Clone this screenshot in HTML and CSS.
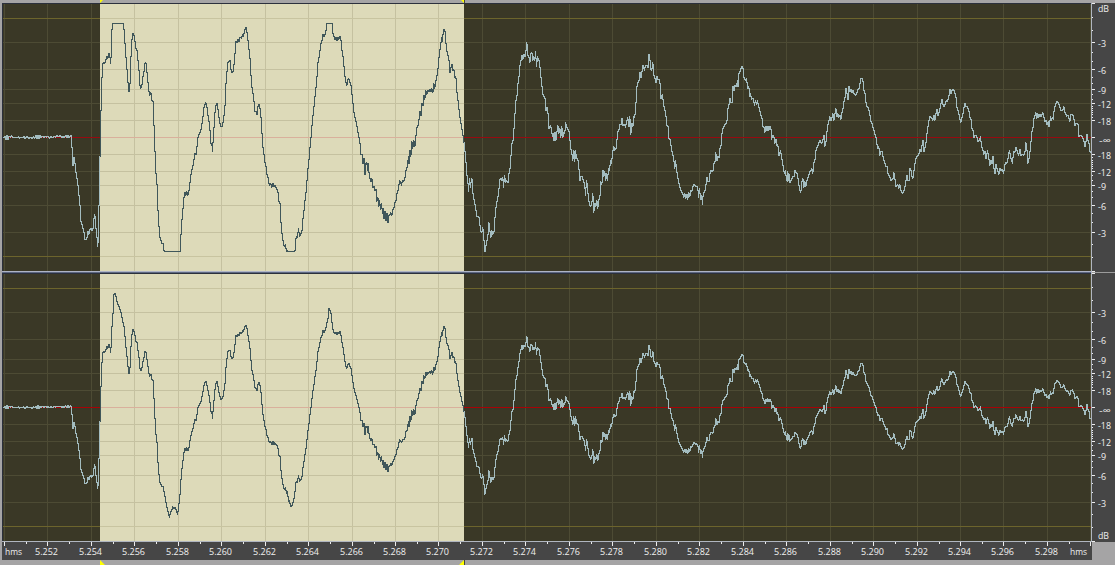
FILE: index.html
```
<!DOCTYPE html>
<html lang="en">
<head>
    <meta charset="UTF-8">
    <title>Waveform</title>
    <link rel="stylesheet" href="styles.css">
</head>
<body>
<div class="editor">
    <svg class="cue-bar" width="1115" height="3" viewBox="0 0 1115 3">
        <path class="cue" d="M100 0h3l-3 3zM461 0h3v3z"/>
        <path class="cue-line" d="M464 0h1v3h-1z"/>
    </svg>
    <div class="tracks">
        <div class="channels">
            <svg class="pane" id="left" width="1089" height="268" viewBox="2 3 1089 268"></svg>
            <div class="divider"></div>
            <svg class="pane" id="right" width="1089" height="268" viewBox="2 3 1089 268"></svg>
        </div>
        <svg class="db-ruler" id="db" width="24" height="539" viewBox="1091 3 24 539"></svg>
    </div>
    <svg class="time-ruler" id="time" width="1090" height="19" viewBox="2 541 1090 19"></svg>
    <svg class="cue-bar" width="1115" height="5" viewBox="0 560 1115 5">
        <path class="cue" d="M100 560l5 5h-5zM464 560v5h-5z"/>
        <path class="cue-line" d="M464 560h1v5h-1z"/>
    </svg>
</div>
<script src="wave.js"></script>
</body>
</html>
```
FILE: styles.css
```
body{ margin:0; background:#a5a4a5; overflow:hidden; }
svg{ display:block; shape-rendering:crispEdges; }
.editor{ width:1115px; height:565px; background:#a5a4a5; }
.tracks{ display:flex; margin-left:2px; height:538px; }
.channels{ width:1089px; }
.divider{ height:2px; box-sizing:border-box; border-top:1px solid #aeb4c5; background:#5d6780; }
.pane{ background:#3a3826; }
.time-ruler{ margin-left:2px; position:relative; }

/* markers over the selection */
.cue{ fill:#ffff00; shape-rendering:auto; }
.cue-line{ fill:#45453c; }

/* pane */
.bg{ fill:#3a3826; }
.grid{ fill:#4d4b34; }
.limit{ fill:#6c642c; }
.zero{ fill:#970a10; }
#right .zero{ fill:#a80206; }
.wave{ fill:none; stroke:#a3bcbf; stroke-width:1; }
.sel .bg{ fill:#dddab9; }
.sel .grid{ fill:#c5c1a0; }
.sel .limit{ fill:#c8c4a0; }
.sel .zero, #right .sel .zero{ fill:#d9b09c; }
.sel .wave{ stroke:#40575a; }
.frame{ fill:#2b303c; }

/* rulers */
.ruler-bg{ fill:#464646; }
.ruler-line{ fill:#b0b6c0; }
.ruler-split{ fill:#9b9b9b; }
.tick{ fill:#ececec; }
.label{ fill:#f0f0f0; font:9.5px "Open Sans", "Noto Sans", sans-serif; }
```
FILE: wave.js
```
// samples: x,y pairs on a grid of 1/3 px, zero level at 412.5
var ZERO = 412.5;
var parts = [
    [0, '10,412 14,408 17,417 20,406 23,417 26,408 30,411 34,407 36,412 52,412 54,409 57,415 60,412 66,412 70,410 74,415 78,409 82,412 86,414 90,411 95,415 99,410 103,414 107,407 110,416 113,406 116,416 119,407 122,412 128,408 131,413 135,408 138,412 143,408 147,414 151,408 155,413 160,409 165,411 170,407 175,410 180,407 184,413 187,408 190,413 195,406 200,412 203,406 206,412 210,406 213,409 ' +
        '215,442 218,497 221,472 223,485 226,512 228,528 231,541 234,570 237,600 240,635 242,663 245,672 248,685 251,698 254,718 258,718 261,706 263,694 265,702 268,690 271,684 274,692 278,684 281,656 283,643 286,680 289,705 291,738 294,717 296,617 299,468 302,330 304,242 307,192 309,187 313,190 317,178 320,168 322,175 325,159 328,168 330,190 333,155 335,88 337,50 340,-39 343,-46 346,-35 350,-15 353,-2 356,8 362,30 365,50 367,70 370,81 373,122 ' +
        '376,165 379,203 382,242 384,262 386,274 388,262 390,220 392,168 395,118 398,100 401,107 403,120 406,145 410,152 413,182 416,212 418,255 421,265 424,257 427,231 430,218 433,190 436,186 438,205 441,232 444,265 447,286 450,278 453,280 455,302 458,305 460,362 462,425 465,485 467,520 471,575 473,632 476,680 478,712 482,722 485,730 488,731 491,751 495,784 498,804 501,824 505,844 507,854 510,831 514,824 516,811 520,818 524,815 528,828 531,842 534,820 536,797 538,765 ' +
        '540,745 542,703 545,658 548,625 551,592 554,577 556,585 559,575 562,585 565,577 568,550 571,527 574,510 578,495 581,478 584,460 587,463 590,440 593,412 597,400 600,395 603,380 607,353 610,325 613,315 616,308 619,320 622,343 625,360 628,385 631,430 634,430 636,455 638,428 641,383 643,342 647,315 650,310 652,325 655,350 659,370 662,380 665,378 669,362 672,330 675,300 677,250 680,215 683,187 686,184 689,182'],
    [690, '0,205 4,216 7,216 9,205 12,182 14,160 17,123 20,127 23,118 26,123 29,112 33,115 37,104 39,108 43,90 46,82 49,92 51,110 54,135 57,160 60,192 62,225 65,262 68,280 71,305 74,333 78,337 80,343 83,320 86,313 89,325 92,352 94,392 97,438 100,460 103,487 106,492 108,520 112,530 115,548 118,555 121,550 124,562 127,549 130,560 133,555 136,562 140,567 143,578 145,603 149,610 150,645 153,688 156,710 159,735 162,740 165,733 168,757 171,751 174,791 177,784 180,810 184,807 187,797 190,784 193,757 196,717 ' +
        '199,708 201,712 204,685 207,708 210,705 213,697 216,683 218,655 221,630 224,600 227,578 230,540 233,505 236,478 239,442 242,412 245,375 248,345 251,320 254,290 257,262 260,228 263,187 266,172 269,150 272,130 275,122 278,104 281,110 284,102 287,92 290,70 293,55 296,14 299,21 302,34 305,70 308,99 311,110 314,117 317,113 320,120 323,113 325,117 327,108 330,110 332,122 334,147 337,165 340,195 343,225 346,247 349,255 352,240 355,235 358,247 361,250 363,270 366,295 369,328 372,345 375,360 378,370 381,390 385,410 388,425 391,463 396,465 398,490 401,475 404,522 406,490 409,488 411,512 413,490 415,515 418,533 421,545 424,535 427,562 431,560 434,572 437,568 439,605 442,592 445,620 447,600 450,628 453,610 456,640 459,625 461,655 464,635 467,660 470,640 473,668 475,648 478,645 481,638 484,645 487,630 490,623 494,608 497,600 500,580 503,572 507,542 510,545 513,555 516,540 519,543 523,535 527,510 530,503 534,470 536,490 539,450 541,470 544,425 547,445 550,420 553,440 556,410 559,385 562,378 566,357 569,335 572,345 575,310 578,315 580,285 583,297 586,272 589,282 592,270 595,275 598,268 601,275 604,265 607,278 610,250 612,265 615,255 618,228 621,225 624,187 627,155 630,140 633,112 636,124 638,103 641,87 644,95 646,125 648,152 653,165 656,180 659,217 662,203 665,192 667,212 670,208 673,232 676,228 678,262 681,290 684,315 687,342 690,362 693,378 696,400 699,410'],
    [1380, '12,445 13,448 16,478 18,520 21,530 24,573 27,535 30,562 33,535 36,540 38,580 40,597 43,610 46,628 50,648 55,650 58,672 60,690 64,698 67,683 70,715 73,762 76,740 79,725 82,712 85,667 88,690 91,712 94,692 97,702 100,700 102,672 105,635 108,610 112,592 115,572 118,540 121,535 125,540 127,532 129,562 132,525 135,548 138,540 141,548 144,545 146,520 149,505 152,465 155,430 158,420 161,385 164,340 167,300 170,285 173,250 176,228 179,197 182,180 185,165 187,178 190,162 194,168 197,150 199,127 202,165 205,170 208,188 211,162 214,158 217,180 220,170 223,180 225,153 228,198 231,170 234,178 237,185 240,220 243,245 246,275 249,290 253,292 257,330 260,322 263,340 266,385 270,375 273,390 276,410 278,400 281,420 284,398 286,421 289,398 292,375 295,400 298,385 301,412 304,380 307,412 310,398 313,400 315,368 318,380 322,388 325,392 328,415 331,445 334,460 337,480 340,450 343,485 345,450 348,475 352,478 355,505 359,540 362,530 366,530 369,545 372,548 375,585 378,542 381,560 384,598 387,610 390,620 394,610 397,580 400,637 403,610 406,620 409,600 412,625 415,600 418,595 421,545 424,553 428,512 430,530 433,515 436,540 439,520 441,540 444,505 447,512 450,480 453,490 456,460 460,440 463,450 467,445 470,418 473,395 476,388 479,372 482,372 485,355 488,375 492,372 495,382 498,365 502,352 504,375 506,380 508,348 511,404 514,370 517,380 520,350 523,353 525,315 528,300 530,258 533,248 536,240 539,217 542,232 545,215 548,195 552,210 555,197 559,195 563,203 566,163 569,180 571,207 574,210 577,187 580,225 583,232 587,248 590,230 593,238 597,240 600,262 602,295 606,282 609,312 613,330 616,345 620,375 623,380 626,415 630,420 633,452 637,462 640,480 643,505 645,480 648,508 651,528 655,550 658,560 662,570 666,580 670,592 673,580 676,595 679,582 682,597 685,578 688,590 691,570 694,573 697,560 701,553 705,560 709,558'],
    [2070, '20,560 23,570 24,592 27,565 30,598 33,585 36,613 38,590 41,578 44,570 47,552 50,533 53,545 56,545 58,520 62,512 67,515 70,492 73,490 76,458 79,482 82,470 86,472 89,445 92,435 95,400 98,385 102,375 107,370 110,360 113,325 117,308 119,295 121,308 125,308 128,260 131,270 134,257 138,260 141,240 143,260 146,220 150,212 154,198 158,205 161,232 165,240 168,235 172,265 175,258 177,290 180,280 183,298 187,295 190,305 192,315 195,300 198,312 201,300 204,320 207,322 210,345 214,350 217,378 220,380 223,398 227,380 230,390 232,378 235,390 238,380 241,380 243,418 247,405 250,410 253,430 257,418 259,435 262,432 264,465 267,465 270,452 273,470 276,485 279,508 282,520 285,510 288,540 291,515 292,545 295,520 298,548 302,540 307,530 311,530 314,512 317,518 321,523 324,545 327,570 331,577 333,550 337,535 340,562 343,545 346,560 350,540 354,530 358,515 361,512 364,505 367,520 370,490 374,478 377,452 381,438 384,432 389,420 393,430 397,422 401,405 403,438 406,430 408,410 411,378 415,362 418,350 420,360 423,362 427,340 430,360 433,345 436,325 439,350 442,340 445,352 448,345 451,358 454,338 457,328 460,305 463,298 467,265 470,280 473,298 476,260 479,275 482,268 485,278 488,270 491,280 495,285 499,280 502,270 505,268 508,252 511,237 515,235 518,245 520,270 523,275 527,308 530,318 534,325 538,345 541,362 545,370 548,382 552,398 556,410 559,430 562,445 565,440 568,465 571,455 575,455 579,478 583,488 586,500 590,498 593,520 598,530 602,540 607,538 610,518 613,530 615,558 619,558 622,553 625,565 628,553 632,570 636,580 640,573 644,560 647,540 650,527 653,540 656,540'],
    [2700, '28,505 32,510 34,530 37,535 40,515 43,492 46,475 50,468 55,462 58,448 62,455 64,440 68,422 70,455 73,445 76,432 80,400 83,378 86,362 89,350 93,352 97,360 100,345 103,360 107,340 110,328 113,345 117,335 121,312 124,298 128,312 131,320 135,310 138,300 141,305 145,290 149,268 152,280 156,268 160,270 163,280 167,292 169,320 173,330 177,350 180,368 183,358 187,345 190,325 194,310 197,318 201,322 205,332 208,350 213,360 215,385 219,395 221,412 225,405 229,410 233,425 237,420 240,410 243,440 247,450 250,462 254,455 257,475 261,452 265,475 268,495 272,482 275,490 278,468 280,505 284,520 287,492 290,505 295,523 298,505 302,512 306,507 309,520 312,500 315,487 319,490 322,478 327,450 330,470 336,490 339,455 343,458 346,442 350,452 354,465 359,447 362,465 366,462 369,467 373,460 376,427 379,445 382,490 386,475 389,455 392,425 395,395 399,375 401,355 406,338 409,355 412,340 415,352 418,343 421,350 424,345 427,338 430,350 434,365 438,360 440,372 444,365 446,378 450,350 453,360 456,352 459,358 461,335 464,318 470,303 474,308 478,320 482,332 486,332 490,320 494,338 498,348 502,345 508,365 511,345 516,342 520,355 524,375 528,370 532,370 536,408 541,405 545,410 549,418 552,432 554,440 557,425 560,402 563,420 566,430 568,455 573,460']
];
var samples = [];
parts.forEach(function(part){
    part[1].split(' ').forEach(function(pair){
        var p = pair.split(',');
        samples.push([part[0] + +p[0], +p[1]]);
    });
});

var xs = [4,47,91,134,178,221,265,308,352,395,438,482,525,569,612,656,699,743,786,830,873,917,960,1003,1047,1090];
var ys = [42,69,89,103,120,154,171,185,205,232];
var SEL = [100,464];

function rect(cls,x,y,w,h){
    return '<rect class="'+cls+'" x="'+x+'" y="'+y+'" width="'+w+'" height="'+h+'"/>';
}
function label(text,x,y,width){
    return '<text class="label" x="'+x+'" y="'+y+'" textLength="'+width+'" lengthAdjust="spacingAndGlyphs">'+text+'</text>';
}

// one vertical run per pixel column keeps the trace stepped
function wavePath(gain){
    var d = '', k = 0, last = null;
    function row(v){
        return Math.floor((ZERO+Math.max(-342, Math.min(341, (v-ZERO)*gain)))/3);
    }
    for(var c=3;c<1091;c++){
        var x = c*3+2.9, top = 999, bottom = -999;
        while(k < samples.length-2 && samples[k+1][0] < x){
            k++;
            if(samples[k][0] >= c*3){
                top = Math.min(top, row(samples[k][1]));
                bottom = Math.max(bottom, row(samples[k][1]));
            }
        }
        var a = samples[k], b = samples[k+1];
        var t = Math.max(0, Math.min(1, (x-1.4-a[0])/(b[0]-a[0])));
        var y = row(a[1]+(b[1]-a[1])*t);
        top = Math.min(top, y);
        bottom = Math.max(bottom, y);
        // start from the row where the previous column ended
        if(last !== null){
            top = Math.min(top, last);
            bottom = Math.max(bottom, last);
        }
        d += 'M'+(c+0.5)+' '+top+'V'+(bottom+1);
        last = y;
    }
    return d;
}

function layer(d){
    var s = rect('bg',2,3,1089,268);
    ys.forEach(function(y){ s += rect('grid',3,y,1088,1); });
    xs.forEach(function(x){ s += rect('grid',x,4,1,267); });
    s += rect('limit',3,18,1088,1)+rect('limit',3,256,1088,1)+rect('zero',3,137,1088,1);
    return s+'<path class="wave" d="'+d+'"/>';
}

function drawPane(id,gain){
    var d = wavePath(gain);
    document.getElementById(id).innerHTML =
        '<clipPath id="clip-'+id+'">'+rect('',SEL[0],3,SEL[1]-SEL[0],268)+'</clipPath>'+
        layer(d)+'<g class="sel" clip-path="url(#clip-'+id+')">'+layer(d)+'</g>'+
        rect('frame',2,3,1089,1)+rect('frame',2,3,1,268);
}
drawPane('left',1);
drawPane('right',0.747);

// level ruler
function drawDb(){
    var s = rect('ruler-bg',1091,3,24,539)+rect('ruler-line',1091,3,1,539);
    var names = {42:'-3',69:'-6',89:'-9',103:'-12',120:'-18'};
    var minor = [17,30,52,61,77,83,94,99,106,108,110,112,114,117];
    [0,270].forEach(function(top){
        minor.forEach(function(y){
            s += rect('tick',1092,top+y,1,1)+rect('tick',1092,top+274-y,1,1);
        });
        for(var y in names){
            [+y,274-y].forEach(function(v){
                s += rect('tick',1092,top+v,3,1)+label(names[y],1098,top+v+5,names[y].length>2 ? 13 : 8);
            });
        }
        s += rect('tick',1092,top+137,3,1)+label('-∞',1099,top+144,12);
    });
    s += rect('tick',1092,3,3,1)+rect('ruler-split',1092,272,23,1)+rect('tick',1092,271,3,1)+rect('tick',1092,273,3,1)+rect('tick',1092,541,3,1);
    s += label('dB',1098,12,11)+label('dB',1098,539,11);
    document.getElementById('db').innerHTML = s;
}
drawDb();

// time ruler
function drawTime(){
    var s = rect('ruler-bg',2,541,1090,19)+rect('ruler-line',2,541,1090,1);
    xs.forEach(function(x,i){
        s += rect('tick',x,542,1,4);
        if(i < xs.length-1) s += rect('tick',Math.floor((x+xs[i+1]+1)/2),542,1,2);
        if(i > 0 && i < xs.length-1) s += label((5.25+i*0.002).toFixed(3),x-12,555,23);
    });
    s += label('hms',5,555,17)+label('hms',1070,555,17);
    document.getElementById('time').innerHTML = s;
}
drawTime();
```
